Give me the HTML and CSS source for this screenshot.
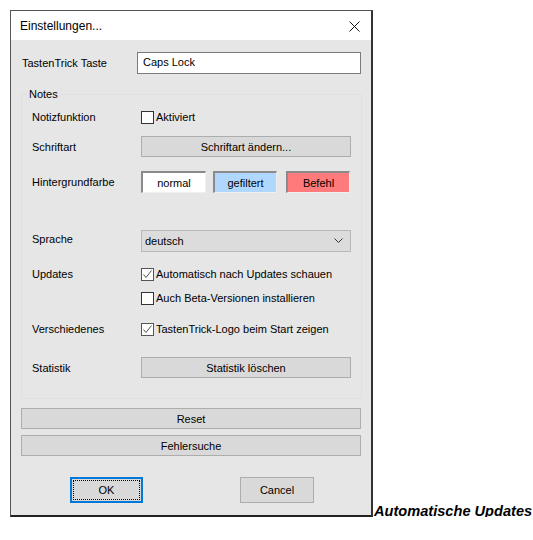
FILE: index.html
```html
<!DOCTYPE html>
<html lang="de">
<head>
<meta charset="utf-8">
<title>Einstellungen</title>
<link rel="stylesheet" href="styles.css">
</head>
<body>
<div class="stage">
  <div class="window">
    <div class="titlebar">
      <span class="title">Einstellungen...</span>
      <svg class="close" width="11" height="11" viewBox="0 0 11 11"><path d="M0.5 0.5 L10.5 10.5 M10.5 0.5 L0.5 10.5" stroke="#111" stroke-width="1" fill="none"/></svg>
    </div>
    <div class="content">
      <div class="keyrow">
        <span class="keylabel">TastenTrick Taste</span>
        <div class="textbox">Caps Lock</div>
      </div>
      <fieldset class="group">
        <legend>Notes</legend>
        <div class="row r-notiz">
          <span class="lbl">Notizfunktion</span>
          <span class="check"><span class="box"></span>Aktiviert</span>
        </div>
        <div class="row r-schrift">
          <span class="lbl">Schriftart</span>
          <div class="btn ctl">Schriftart ändern...</div>
        </div>
        <div class="row r-farbe">
          <span class="lbl">Hintergrundfarbe</span>
          <div class="swatches">
            <div class="swatch sw-normal">normal</div>
            <div class="swatch sw-filter">gefiltert</div>
            <div class="swatch sw-befehl">Befehl</div>
          </div>
        </div>
        <div class="row r-sprache">
          <span class="lbl lbl-up">Sprache</span>
          <div class="btn select ctl"><span>deutsch</span>
            <svg width="9" height="6" viewBox="0 0 9 6"><path d="M0.5 0.5 L4.5 4.5 L8.5 0.5" stroke="#333" stroke-width="1" fill="none"/></svg>
          </div>
        </div>
        <div class="row r-updates">
          <span class="lbl">Updates</span>
          <span class="check"><span class="box checked"><svg width="11" height="11" viewBox="0 0 11 11"><path d="M1.5 5.5 L4 8.5 L9.5 1.5" stroke="#555" stroke-width="1" fill="none"/></svg></span>Automatisch nach Updates schauen</span>
        </div>
        <div class="row r-beta">
          <span class="lbl"></span>
          <span class="check"><span class="box"></span>Auch Beta-Versionen installieren</span>
        </div>
        <div class="row r-versch">
          <span class="lbl">Verschiedenes</span>
          <span class="check"><span class="box checked"><svg width="11" height="11" viewBox="0 0 11 11"><path d="M1.5 5.5 L4 8.5 L9.5 1.5" stroke="#555" stroke-width="1" fill="none"/></svg></span>TastenTrick-Logo beim Start zeigen</span>
        </div>
        <div class="row r-stat">
          <span class="lbl">Statistik</span>
          <div class="btn ctl">Statistik löschen</div>
        </div>
      </fieldset>
      <div class="btn wide r-reset">Reset</div>
      <div class="btn wide r-fehler">Fehlersuche</div>
      <div class="actions">
        <div class="btn ok"><span class="focus">OK</span></div>
        <div class="btn cancel">Cancel</div>
      </div>
    </div>
  </div>
  <div class="caption">Automatische Updates</div>
</div>
</body>
</html>
```
FILE: styles.css
```css
html, body {
  margin: 0;
  padding: 0;
  background: #ffffff;
}
body {
  padding: 10px 0 0 10px;
  font-family: "Liberation Sans", Arial, sans-serif;
  font-size: 11px;
  color: #000;
}
.stage {
  display: flex;
  align-items: flex-end;
}
.window {
  width: 360px;
  border-left: 1px solid #555;
  border-top: 1px solid #555;
  border-right: 2px solid #333;
  border-bottom: 2px solid #222;
  display: flex;
  flex-direction: column;
}
.titlebar {
  height: 29px;
  background: #fff;
  display: flex;
  align-items: center;
  justify-content: space-between;
  padding: 0 11px 0 9px;
  font-size: 12px;
}
.title { line-height: 16px; }
.close { display: block; margin-top: 1px; }
.content {
  background: #e6e6e6;
  padding: 12px 0 12px 10px;
  display: flex;
  flex-direction: column;
}
.keyrow {
  display: flex;
  align-items: center;
  height: 22px;
  padding-left: 1px;
}
.keylabel {
  width: 115px;
}
.textbox {
  width: 217px;
  height: 20px;
  background: #fff;
  border: 1px solid #7a7a7a;
  padding-left: 5px;
  line-height: 18px;
}
.group {
  margin: 12px 0 0 0;
  width: 320px;
  border: 1px solid #e0e0e0;
  padding: 0 9px 20px 10px;
}
.group legend {
  padding: 0 2px;
  margin-left: -5px;
  line-height: 16px;
}
.row {
  display: flex;
  align-items: center;
}
.lbl {
  width: 109px;
  flex: none;
}
.lbl-up { margin-top: -5px; }
.r-notiz { height: 20px; margin-top: 5px; }
.r-schrift { height: 21px; margin-top: 9px; }
.r-farbe { height: 22px; margin-top: 14px; }
.r-sprache { height: 22px; margin-top: 37px; }
.r-updates { height: 20px; margin-top: 12px; }
.r-beta { height: 20px; margin-top: 4px; }
.r-versch { height: 20px; margin-top: 11px; }
.r-stat { height: 21px; margin-top: 18px; }
.check {
  display: flex;
  align-items: center;
}
.box {
  width: 11px;
  height: 11px;
  border: 1px solid #333;
  background: #fff;
  margin-right: 2px;
  display: flex;
  align-items: center;
  justify-content: center;
}
.box.checked { border-color: #555; }
.box svg { display: block; }
.btn {
  background: #d9d9d9;
  border: 1px solid #adadad;
  display: flex;
  align-items: center;
  justify-content: center;
  box-sizing: border-box;
}
.ctl {
  width: 210px;
  height: 21px;
}
.swatches {
  display: flex;
}
.swatch {
  height: 22px;
  box-sizing: border-box;
  border-top: 2px solid #8a8a8a;
  border-left: 2px solid #8a8a8a;
  border-right: 1px solid #efefef;
  border-bottom: 1px solid #efefef;
  display: flex;
  align-items: center;
  justify-content: center;
}
.sw-normal { width: 65px; background: #fff; }
.sw-filter { width: 64px; margin-left: 7px; background: #b0d8ff; }
.sw-befehl { width: 64px; margin-left: 9px; background: #ff7a7a; }
.select {
  justify-content: space-between;
  padding: 0 7px 0 3px;
  height: 22px;
  border-color: #b8b8b8;
  background: #dcdcdc;
}
.select svg { display: block; }
.wide {
  width: 340px;
  height: 21px;
}
.r-reset { margin-top: 9px; }
.r-fehler { margin-top: 6px; }
.actions {
  display: flex;
  margin-top: 21px;
  height: 26px;
}
.ok {
  margin-left: 49px;
  width: 73px;
  height: 26px;
  border: 2px solid #0078d7;
  padding: 1px;
}
.focus {
  flex: 1;
  align-self: stretch;
  border: 1px dotted #000;
  display: flex;
  align-items: center;
  justify-content: center;
}
.cancel {
  margin-left: 97px;
  width: 74px;
  height: 26px;
}
.caption {
  font-family: "Liberation Sans", Arial, sans-serif;
  font-weight: bold;
  font-style: italic;
  font-size: 14.6px;
  line-height: 14px;
  margin-left: 1px;
  margin-bottom: -1px;
}
```
